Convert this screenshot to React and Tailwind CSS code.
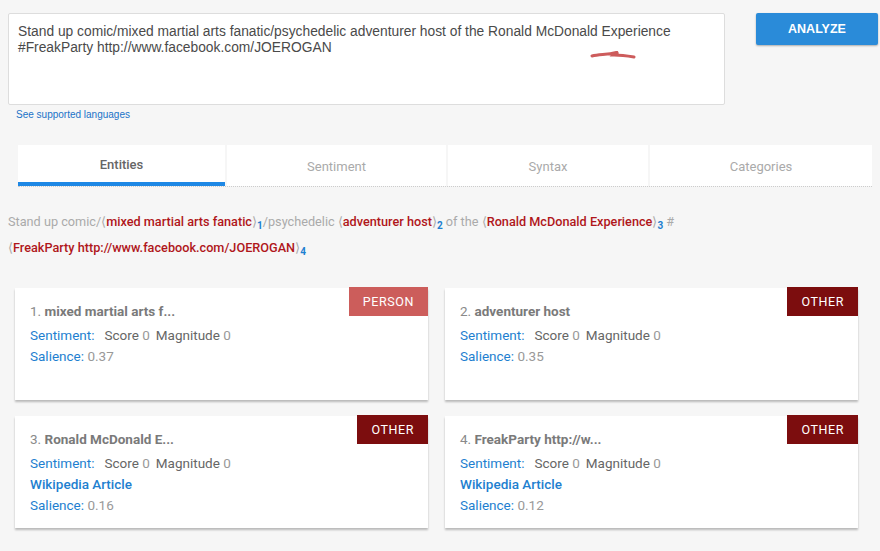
import React from "react";

const entities = [
  { n: 1, name: "mixed martial arts f...", type: "PERSON", salience: "0.37", wiki: false },
  { n: 2, name: "adventurer host", type: "OTHER", salience: "0.35", wiki: false },
  { n: 3, name: "Ronald McDonald E...", type: "OTHER", salience: "0.16", wiki: true },
  { n: 4, name: "FreakParty http://w...", type: "OTHER", salience: "0.12", wiki: true },
];

const tabs = [
  { label: "Entities", w: "w-[207px]", active: true },
  { label: "Sentiment", w: "w-[219px]" },
  { label: "Syntax", w: "w-[200px]" },
  { label: "Categories", w: "w-[222px]" },
];

const Ent = ({ children, n }) => (
  <>
    <span className="text-[#aaa]">⟨</span>
    <span className="text-[#b0161b] font-medium">{children}</span>
    <span className="text-[#aaa]">⟩</span>
    <sub className="text-[#1e7fd0] font-bold text-[10px]">{n}</sub>
  </>
);

const EntityCard = ({ e }) => (
  <div className="relative bg-white h-[112px] shadow-[0_2px_2px_rgba(0,0,0,0.25)] pl-[15px] pt-[13px] text-[13.5px] leading-[21px]">
    <div
      className={`absolute top-[-1px] right-0 h-[29px] px-[14px] flex items-center text-white text-[12.5px] tracking-[0.6px] ${
        e.type === "PERSON" ? "bg-[#cc5d5b]" : "bg-[#7c0d0e]"
      }`}
    >
      {e.type}
    </div>
    <div className="text-[#8a8a8a] mb-[3px]">
      {e.n}. <span className="font-bold text-[#7a7a7a]">{e.name}</span>
    </div>
    <div>
      <span className="text-[#1e7fd0]">Sentiment:</span>
      <span className="ml-[10px] text-[#666]">Score</span> <span className="text-[#999]">0</span>
      <span className="ml-[6px] text-[#666]">Magnitude</span> <span className="text-[#999]">0</span>
    </div>
    {e.wiki && <div className="text-[#1e7fd0] font-medium">Wikipedia Article</div>}
    <div>
      <span className="text-[#1e7fd0]">Salience:</span> <span className="text-[#999]">{e.salience}</span>
    </div>
  </div>
);

export default function App() {
  return (
    <div className="w-[880px] h-[551px] bg-[#f6f6f6] overflow-hidden font-['Roboto',sans-serif]">
      <div className="flex pt-[13px] pl-[8px]">
        <div className="relative w-[717px] h-[92px] bg-white border border-[#ddd] rounded-[2px] pl-[9px] pt-[10px] font-['Liberation_Sans',Arial,sans-serif] text-[13.8px] leading-[16px] text-[#4a4a4a]">
          Stand up comic/mixed martial arts fanatic/psychedelic adventurer host of the Ronald McDonald Experience
          <br />
          #FreakParty http://www.facebook.com/JOEROGAN
          <svg className="absolute left-[581px] top-[37px]" width="46" height="9" viewBox="0 0 46 9">
            <path d="M2 5 C10 3 18 4 28 1 L24 4 C32 4 38 5 44 6" stroke="#cd5c5c" strokeWidth="3" fill="none" strokeLinecap="round" />
          </svg>
        </div>
        <button className="ml-[31px] w-[122px] h-[32px] bg-[#2a8bd9] rounded-[2px] text-white font-bold text-[12.5px] pt-[1px] font-['Liberation_Sans',Arial,sans-serif] shadow-[0_1px_2px_rgba(0,0,0,0.3)]">
          ANALYZE
        </button>
      </div>
      <div className="pl-[16px] pt-[2px] text-[10px] text-[#1a73c8] font-['Liberation_Sans',Arial,sans-serif]">
        See supported languages
      </div>

      <div className="ml-[18px] mt-[23px] w-[854px] flex gap-[2px] border-b border-dotted border-[#ccc]">
        {tabs.map((t) => (
          <div
            key={t.label}
            className={`${t.w} h-[41px] bg-white flex items-center justify-center text-[13px] pt-[2px] ${
              t.active ? "text-[#666] font-medium border-b-[4px] border-[#1e88e5]" : "text-[#aaa]"
            }`}
          >
            {t.label}
          </div>
        ))}
      </div>

      <div className="pl-[8px] pt-[22px] text-[12.7px] leading-[26px] text-[#aaa] w-[720px]">
        Stand up comic/<Ent n={1}>mixed martial arts fanatic</Ent>/psychedelic <Ent n={2}>adventurer host</Ent> of the{" "}
        <Ent n={3}>Ronald McDonald Experience</Ent> #
        <br />
        <Ent n={4}>FreakParty http://www.facebook.com/JOEROGAN</Ent>
      </div>

      <div className="ml-[15px] mt-[27px] w-[843px] grid grid-cols-2 gap-x-[17px] gap-y-[16px]">
        {entities.map((e) => (
          <EntityCard key={e.n} e={e} />
        ))}
      </div>
    </div>
  );
}
